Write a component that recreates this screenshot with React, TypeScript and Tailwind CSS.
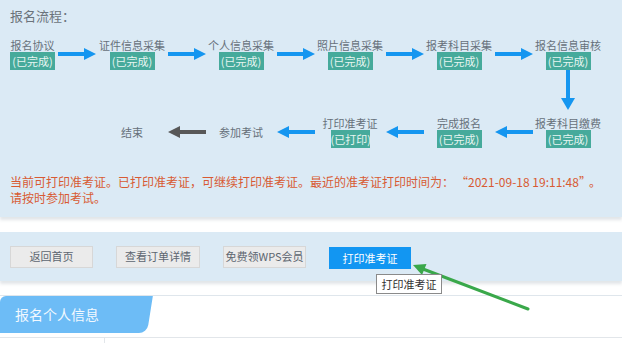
const font = { fontFamily: '"Noto Sans CJK SC", "Noto Sans", sans-serif' };

function RightArrow({ color = "#1596f0" }: { color?: string }) {
  return (
    <svg width="38" height="14" viewBox="0 0 38 14">
      <rect x="0" y="5" width="28" height="4" fill={color} />
      <polygon points="26,1 38,7 26,13" fill={color} />
    </svg>
  );
}

function LeftArrow({ color = "#1596f0" }: { color?: string }) {
  return (
    <svg width="38" height="14" viewBox="0 0 38 14">
      <rect x="10" y="5" width="28" height="4" fill={color} />
      <polygon points="12,1 0,7 12,13" fill={color} />
    </svg>
  );
}

function Step({ label, status = "(已完成)", wide = true, badgeW = "w-[45px]" }: { label: string; status?: string; wide?: boolean; badgeW?: string }) {
  return (
    <div className={`${wide ? "w-[66px]" : "w-[45px]"} shrink-0 flex flex-col items-center`}>
      <div className="text-[11px] leading-[14px] text-[#67717b] whitespace-nowrap">{label}</div>
      <div className={`${badgeW} h-[18px] bg-[#46aa9b] text-[#e6f5f1] text-[11px] leading-[18px] text-center whitespace-nowrap`}>
        {status}
      </div>
    </div>
  );
}

function Slot({ children, w = "w-[43px]" }: { children?: React.ReactNode; w?: string }) {
  return <div className={`${w} shrink-0 flex items-center justify-center`}>{children}</div>;
}

export default function App() {
  return (
    <div className="relative w-[622px] h-[343px] bg-white overflow-hidden" style={font}>
      {/* 报名流程 */}
      <div className="bg-[#dbeaf5] pt-[8px] pb-[11px] px-[10px] shadow-[0_3px_3px_rgba(90,110,130,0.18)]">
        <div className="text-[13px] leading-[16px] text-[#6b737b]">报名流程：</div>

        <div className="flex items-center mt-[14px]">
          <Step label="报名协议" wide={false} />
          <Slot w="w-[44px]"><RightArrow /></Slot>
          <Step label="证件信息采集" />
          <Slot><RightArrow /></Slot>
          <Step label="个人信息采集" />
          <Slot><RightArrow /></Slot>
          <Step label="照片信息采集" />
          <Slot><RightArrow /></Slot>
          <Step label="报考科目采集" />
          <Slot><RightArrow /></Slot>
          <Step label="报名信息审核" />
        </div>

        <div className="h-[46px] flex justify-end pr-[11px]">
          <div className="w-[66px] flex justify-center">
            <svg width="14" height="40" viewBox="0 0 14 40">
              <rect x="5" y="0" width="4" height="30" fill="#1596f0" />
              <polygon points="0,28 7,40 14,28" fill="#1596f0" />
            </svg>
          </div>
        </div>

        <div className="flex items-center">
          <div className="w-[45px] shrink-0" />
          <Slot w="w-[44px]" />
          <div className="w-[66px] shrink-0 text-center text-[11px] text-[#67717b]">结束</div>
          <Slot><LeftArrow color="#585858" /></Slot>
          <div className="w-[66px] shrink-0 text-center text-[11px] text-[#67717b]">参加考试</div>
          <Slot><LeftArrow /></Slot>
          <Step label="打印准考证" status="(已打印)" badgeW="w-[39px]" />
          <Slot><LeftArrow /></Slot>
          <Step label="完成报名" />
          <Slot><LeftArrow /></Slot>
          <Step label="报考科目缴费" />
        </div>

        <div className="mt-[26px] text-[12px] leading-[16px] text-[#d85a33]">
          <div className="whitespace-nowrap">
            当前可打印准考证。已打印准考证，可继续打印准考证。最近的准考证打印时间为：
            <span className="ml-[8px]">“2021-09-18 19:11:48”</span>
            <span className="ml-[4px]">。</span>
          </div>
          <div>请按时参加考试。</div>
        </div>
      </div>

      {/* 按钮 */}
      <div className="mt-[15px] h-[49px] bg-[#dbeaf5] shadow-[0_3px_3px_rgba(90,110,130,0.18)] flex items-center gap-[23px] px-[10px]">
        <button className="w-[83px] h-[22px] bg-[#ebebeb] border border-[#d7d7d7] text-[11px] text-[#5d6670]">返回首页</button>
        <button className="w-[84px] h-[22px] bg-[#ebebeb] border border-[#d7d7d7] text-[11px] text-[#5d6670]">查看订单详情</button>
        <button className="w-[83px] h-[22px] bg-[#ebebeb] border border-[#d7d7d7] text-[11px] text-[#5d6670]">免费领WPS会员</button>
        <div className="relative">
          <button className="w-[82px] h-[22px] bg-[#1296f2] text-[11px] text-white">打印准考证</button>
          <div className="absolute left-[47px] top-[30px] z-10 w-[66px] h-[20px] bg-white border border-[#8a8a8a] text-[11px] leading-[18px] text-center text-[#333]">
            打印准考证
          </div>
        </div>
      </div>

      {/* 报名个人信息 */}
      <div className="mt-[14px] border-t border-[#dfe6ec]">
        <div className="h-[42px] border-b border-[#e2e6ea]">
          <div className="relative w-[153px] h-[37px] rounded-tl-[6px] overflow-hidden">
            <div className="absolute inset-y-0 -left-[20px] right-[6px] bg-[#6dbcf6] -skew-x-[9deg] origin-bottom rounded-br-[8px]" />
            <div className="relative pl-[15px] text-[14px] leading-[37px] text-[#f2f9ff]">报名个人信息</div>
          </div>
        </div>
        <div className="flex h-[10px]">
          <div className="w-[105px] border-r border-[#e2e6ea]" />
        </div>
      </div>

      {/* 标注箭头 */}
      <svg className="absolute left-[405px] top-[258px] pointer-events-none" width="130" height="56" viewBox="0 0 130 56">
        <line x1="123" y1="51" x2="18" y2="11" stroke="#3aa84a" strokeWidth="3" strokeLinecap="round" />
        <polygon points="8,7 21.5,6 17,17" fill="#3aa84a" />
      </svg>
    </div>
  );
}
